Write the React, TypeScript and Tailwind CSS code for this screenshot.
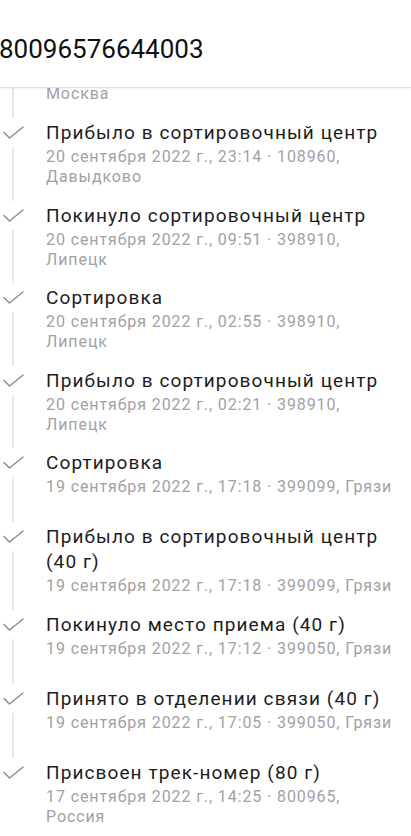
import React from "react";

interface IEvent {
  title: string;
  info: string;
}

const events: IEvent[] = [
  { title: "Прибыло в сортировочный центр", info: "20 сентября 2022 г., 23:14 · 108960, Давыдково" },
  { title: "Покинуло сортировочный центр", info: "20 сентября 2022 г., 09:51 · 398910, Липецк" },
  { title: "Сортировка", info: "20 сентября 2022 г., 02:55 · 398910, Липецк" },
  { title: "Прибыло в сортировочный центр", info: "20 сентября 2022 г., 02:21 · 398910, Липецк" },
  { title: "Сортировка", info: "19 сентября 2022 г., 17:18 · 399099, Грязи" },
  { title: "Прибыло в сортировочный центр (40 г)", info: "19 сентября 2022 г., 17:18 · 399099, Грязи" },
  { title: "Покинуло место приема (40 г)", info: "19 сентября 2022 г., 17:12 · 399050, Грязи" },
  { title: "Принято в отделении связи (40 г)", info: "19 сентября 2022 г., 17:05 · 399050, Грязи" },
  { title: "Присвоен трек-номер (80 г)", info: "17 сентября 2022 г., 14:25 · 800965, Россия" },
];

const Check = () => (
  <svg width="24" height="16" viewBox="0 0 24 16" fill="none" className="mt-[5px]">
    <path d="M4 7.5 L9.5 13 L23 2" stroke="#8e8e8e" strokeWidth="1.5" strokeLinecap="round" strokeLinejoin="round" />
  </svg>
);

const EventRow = ({ event, last }: { event: IEvent; last: boolean }) => {
  return (
    <div className="flex min-h-[74px]">
      <div className="w-[46px] shrink-0 flex flex-col">
        <Check />
        {!last && <div className="ml-[12px] mt-[6px] mb-[2px] w-[2px] flex-1 bg-[#e8e8e8]" />}
      </div>
      <div className="flex-1 pr-3 pb-[15.5px]">
        <p className="text-[19px] leading-[25px] tracking-[1.1px] text-[#1d1d1d]">{event.title}</p>
        <p className="mt-[2px] text-[16px] leading-5 tracking-[0.9px] text-[#a2a2a2]">{event.info}</p>
      </div>
    </div>
  );
};

export default function App() {
  return (
    <div className="w-[411px] h-[836px] overflow-hidden bg-white flex flex-col font-['Roboto',sans-serif]">
      <header className="relative z-10 h-[88px] shrink-0 bg-white border-b border-[#e0e0e0] shadow-[0_1px_2px_rgba(0,0,0,0.06)]">
        <h1 className="pt-[33px] -ml-[1px] text-[26px] leading-8 text-[#111]">80096576644003</h1>
      </header>

      <div className="flex-1">
        {/* tail of the item scrolled under the header */}
        <div className="flex h-[32px]">
          <div className="w-[46px] shrink-0 flex">
            <div className="ml-[12px] mb-[2px] w-[2px] bg-[#e8e8e8]" />
          </div>
          <p className="-mt-[4px] text-[16px] leading-5 tracking-[0.9px] text-[#a2a2a2]">Москва</p>
        </div>

        {events.map((e, i) => (
          <EventRow key={i} event={e} last={i === events.length - 1} />
        ))}
      </div>
    </div>
  );
}
